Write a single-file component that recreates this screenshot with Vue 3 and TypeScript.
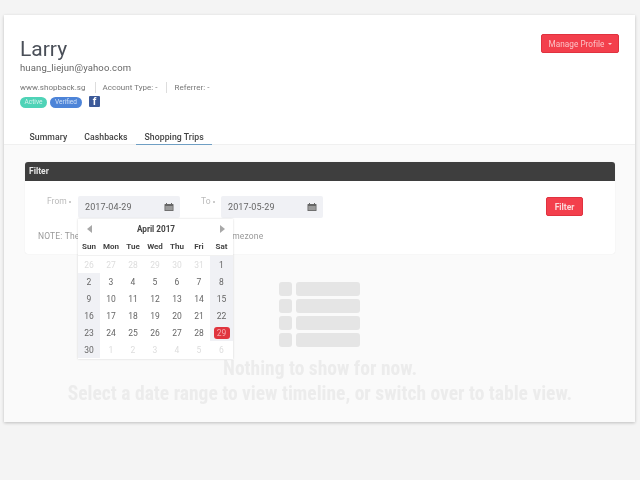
<script setup lang="ts">
interface Day { n: number; out: boolean; weekend: boolean; selected: boolean }
const weekdays: string[] = ['Sun', 'Mon', 'Tue', 'Wed', 'Thu', 'Fri', 'Sat']
const tabs: string[] = ['Summary', 'Cashbacks', 'Shopping Trips']
const nums: number[] = [26, 27, 28, 29, 30, 31, 1, 2, 3, 4, 5, 6, 7, 8, 9, 10, 11, 12, 13, 14, 15, 16, 17, 18, 19, 20, 21, 22, 23, 24, 25, 26, 27, 28, 29, 30, 1, 2, 3, 4, 5, 6]
const days: Day[] = nums.map((n, i) => {
  const out = i < 6 || i > 35
  return { n, out, weekend: !out && (i % 7 === 0 || i % 7 === 6), selected: i === 34 }
})
const rows: number[] = [0, 1, 2, 3]
</script>

<template>
  <div class="page">
    <div class="card">
      <header class="head">
        <div class="head-top">
          <div>
            <h1 class="name">Larry</h1>
            <div class="email">huang_liejun@yahoo.com</div>
          </div>
          <button class="btn manage">Manage Profile <span class="caret"></span></button>
        </div>
        <div class="meta">
          <span class="meta-item first">www.shopback.sg</span>
          <span class="meta-item">Account Type: -</span>
          <span class="meta-item last">Referrer: -</span>
        </div>
        <div class="badges">
          <span class="badge active">Active</span>
          <span class="badge verified">Verified</span>
          <span class="fb">f</span>
        </div>
        <nav class="tabs">
          <a v-for="(t, i) in tabs" :key="t" class="tab" :class="{ on: i === 2 }">{{ t }}</a>
        </nav>
      </header>
      <main class="body">
        <section class="panel">
          <div class="panel-title">Filter</div>
          <div class="panel-body">
            <div class="filter-row">
              <label class="lbl from">From <i class="req"></i></label>
              <div class="field">
                <div class="input">
                  <span>2017-04-29</span>
                  <svg class="cal-ico" viewBox="0 0 10 10" width="10" height="10"><path fill="#666" d="M1 2h1V1h1v1h4V1h1v1h1a.5.5 0 0 1 .5.5v6a.5.5 0 0 1-.5.5H1a.5.5 0 0 1-.5-.5v-6A.5.5 0 0 1 1 2z" /><path fill="#9a9a9a" d="M1.300 4h7.400v4.200H1.300z" /></svg>
                </div>
                <div class="calendar">
                  <div class="cal-head">
                    <span class="arrow left"></span>
                    <span class="month">April 2017</span>
                    <span class="arrow right"></span>
                  </div>
                  <div class="cal-grid week">
                    <span v-for="w in weekdays" :key="w" class="wd">{{ w }}</span>
                  </div>
                  <div class="cal-grid">
                    <span v-for="(d, i) in days" :key="i" class="day" :class="{ out: d.out, weekend: d.weekend, selected: d.selected }"><b>{{ d.n }}</b></span>
                  </div>
                </div>
              </div>
              <label class="lbl to">To <i class="req"></i></label>
              <div class="field">
                <div class="input">
                  <span>2017-05-29</span>
                  <svg class="cal-ico" viewBox="0 0 10 10" width="10" height="10"><path fill="#666" d="M1 2h1V1h1v1h4V1h1v1h1a.5.5 0 0 1 .5.5v6a.5.5 0 0 1-.5.5H1a.5.5 0 0 1-.5-.5v-6A.5.5 0 0 1 1 2z" /><path fill="#9a9a9a" d="M1.300 4h7.400v4.200H1.300z" /></svg>
                </div>
              </div>
              <button class="btn go">Filter</button>
            </div>
            <p class="note">NOTE: These dates are based on your account's timezone</p>
          </div>
        </section>
        <div class="empty">
          <div class="illus">
            <template v-for="r in rows" :key="r">
              <span class="sq"></span><span class="bar"></span>
            </template>
          </div>
          <p class="msg">Nothing to show for now.</p>
          <p class="msg">Select a date range to view timeline, or switch over to table view.</p>
        </div>
      </main>
    </div>
  </div>
</template>

<style>
html, body { margin: 0; background: #f4f4f4; }
</style>

<style scoped>
.page {
  width: 640px;
  height: 480px;
  box-sizing: border-box;
  padding: 15px 5px 0 4px;
  background: #f4f4f4;
  font-family: Roboto, "Liberation Sans", sans-serif;
  overflow: hidden;
  filter: blur(0.45px);
}
.card {
  height: 407px;
  background: #fafafa;
  box-shadow: 0 1px 3px rgba(0, 0, 0, .22);
  display: flex;
  flex-direction: column;
}
.head {
  background: #fff;
  padding: 0 16px;
  height: 129px;
  border-bottom: 1px solid #f0f0f0;
  box-sizing: content-box;
  display: flex;
  flex-direction: column;
}
.head-top { display: flex; justify-content: space-between; align-items: flex-start; }
.name {
  margin: 23px 0 0;
  font-size: 21px;
  line-height: 23px;
  font-weight: 400;
  color: #4a4f58;
}
.email { font-size: 9.500px; line-height: 13px; color: #666; letter-spacing: .13px; }
.btn {
  border: 1px solid #e0323f;
  background: #f33f4c;
  border-radius: 2px;
  font-family: inherit;
  padding: 0;
  color: #fbc2c6;
}
.manage { margin-top: 19px; width: 78px; height: 19px; font-size: 8.200px; letter-spacing: .05px; }
.caret {
  display: inline-block;
  border: 2px solid transparent;
  border-top-color: #fbd0d3;
  border-bottom: 0;
  vertical-align: middle;
  margin-left: 1px;
}
.meta { display: flex; margin-top: 8px; font-size: 8px; line-height: 11px; color: #777; letter-spacing: .03px; }
.meta-item { padding: 0 8px 0 7px; border-left: 1px solid #ddd; }
.meta-item.last { padding-left: 8px; }
.meta-item.first { padding: 0 9px 0 0; border: 0; }
.badges { display: flex; align-items: flex-start; margin-top: 3px; height: 12px; }
.badge {
  height: 11px;
  line-height: 11px;
  margin-top: 1px;
  border-radius: 6px;
  font-size: 6.500px;
  text-align: center;
  color: #d5f3ec;
}
.active { width: 27px; background: #4fd3b7; }
.verified { width: 32px; margin-left: 3px; background: #4d84d8; color: #cfe0f7; }
.fb {
  width: 11px;
  height: 11px;
  margin-left: 7px;
  background: #3d5a98;
  border-radius: 1px;
  color: #fff;
  font-size: 10px;
  font-weight: 700;
  line-height: 12px;
  text-align: center;
}
.tabs { display: flex; margin-top: auto; margin-left: 1px; }
.tab {
  padding: 0 8.500px;
  height: 16px;
  line-height: 16px;
  font-size: 8.700px;
  font-weight: 500;
  color: #444;
  letter-spacing: .06px;
  margin-bottom: -1px;
}
.tab.on { border-bottom: 1px solid #6f9fc4; box-sizing: border-box; }
.body { flex: 1; padding: 17px 20px 0 21px; display: flex; flex-direction: column; }
.panel { background: #fff; border-radius: 3px; box-shadow: 0 0 1px rgba(0, 0, 0, .12); }
.panel-title {
  height: 19px;
  line-height: 19px;
  padding-left: 4px;
  background: #3e3e3e;
  border-radius: 3px 3px 0 0;
  color: #e6e6e6;
  font-size: 8.500px;
  font-weight: 700;
}
.panel-body { height: 73px; position: relative; }
.filter-row { display: flex; align-items: flex-start; padding-top: 15px; }
.lbl { font-size: 8.500px; color: #bbb; line-height: 11px; }
.from { margin-left: 22px; width: 31px; }
.to { margin-left: 21px; width: 20px; }
.req {
  display: inline-block;
  width: 2px;
  height: 2px;
  border-radius: 50%;
  background: #bbb;
  vertical-align: middle;
}
.field { position: relative; }
.input {
  width: 102px;
  height: 22px;
  box-sizing: border-box;
  background: #f0f1f5;
  border-radius: 2px;
  padding: 0 6px 0 7px;
  display: flex;
  justify-content: space-between;
  align-items: center;
  font-size: 9px;
  letter-spacing: .12px;
  color: #666;
}
.cal-ico { margin-top: -1px; }
.go { width: 37px; height: 19px; margin-left: auto; margin-right: 32px; margin-top: 1px; font-size: 8.500px; font-weight: 700; color: #fbd8da; }
.note { position: absolute; left: 13px; top: 50px; margin: 0; font-size: 8.500px; color: #999; line-height: 11px; white-space: nowrap; letter-spacing: .16px; }
.calendar {
  position: absolute;
  z-index: 5;
  left: 0;
  top: 23px;
  width: 155px;
  height: 140px;
  background: #fff;
  box-shadow: 0 0 2px rgba(0, 0, 0, .16);
}
.cal-head { height: 20px; display: flex; align-items: center; justify-content: space-between; padding: 0 8px 0 9px; }
.month { font-size: 8.200px; font-weight: 700; color: #444; }
.arrow { width: 0; height: 0; border: 4px solid transparent; border-left: 0; border-right: 5px solid #a8a8a8; }
.arrow.right { border-right: 0; border-left: 5px solid #a8a8a8; }
.cal-grid { display: grid; grid-template-columns: repeat(6, 22px) 23px; }
.week { height: 16px; border-bottom: 1px solid #f1f1f1; box-sizing: content-box; }
.wd { font-size: 8px; font-weight: 700; color: #444; line-height: 16px; text-align: center; }
.day { height: 17px; display: flex; align-items: center; justify-content: center; font-size: 8.500px; color: #666; }
.day b { font-weight: 400; }
.out { color: #ddd; }
.weekend { background: #f0f1f5; font-weight: 500; }
.selected b {
  width: 16px;
  height: 12px;
  line-height: 12px;
  background: #e0353f;
  color: #f6a9ae;
  border-radius: 3px;
  text-align: center;
}
.empty { display: flex; flex-direction: column; align-items: center; flex: 1; }
.illus {
  display: grid;
  grid-template-columns: 13px 64px;
  grid-auto-rows: 14px;
  gap: 3px 4px;
  margin-top: 28px;
  margin-right: 2px;
}
.sq, .bar { background: #e5e5e5; border-radius: 3px; }
.msg {
  margin: 0;
  font-size: 19.500px;
  line-height: 25px;
  font-weight: 700;
  font-stretch: condensed;
  color: #ececec;
  white-space: nowrap;
}
.illus + .msg { margin-top: 9px; }
</style>
